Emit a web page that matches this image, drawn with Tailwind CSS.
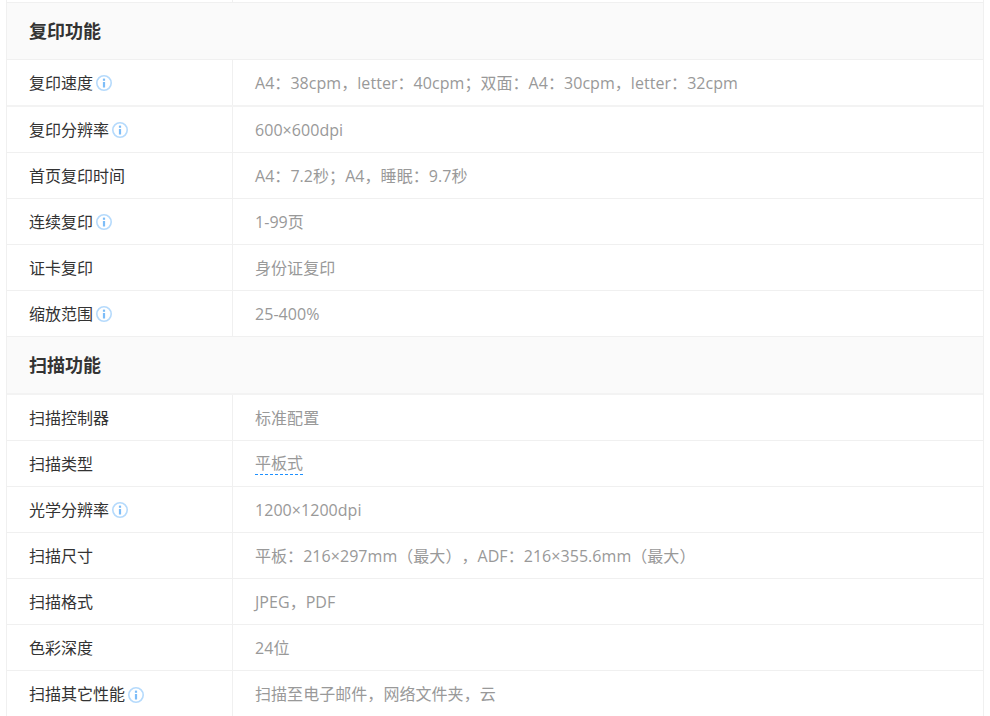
<!DOCTYPE html>
<html lang="zh-CN">

<head>
    <meta charset="UTF-8">
    <meta name="viewport" content="width=device-width, initial-scale=1.0">
    <title>参数</title>
    <script src="https://cdn.jsdelivr.net/npm/@tailwindcss/browser@4"></script>
</head>

<body class="h-[716px] overflow-hidden bg-white font-['Open_Sans','Noto_Sans_CJK_SC',sans-serif] text-[16px] text-[#333] [text-spacing-trim:space-all]">
    <div class="ml-[6px] w-[978px] border-x border-[#f0f0f0]">

        <!-- top sliver of previous row -->
        <div class="flex h-[3px] border-b border-[#f0f0f0]">
            <div class="w-[226px] border-r border-[#f0f0f0]"></div>
        </div>

        <!-- 复印功能 -->
        <div class="flex h-[57px] items-center border-b border-[#f0f0f0] bg-[#fafafa] pl-[22px] text-[18px] font-bold">复印功能</div>

        <div class="flex h-[47px] border-b-2 border-[#f3f3f3]">
            <div class="flex w-[226px] items-center gap-[3px] border-r border-[#f0f0f0] pl-[22px]">复印速度
                <svg class="mt-[1px] h-4 w-4" viewBox="0 0 16 16"><circle cx="8" cy="8" r="7.2" fill="none" stroke="#b5dafc" stroke-width="1.6"/><rect x="6.9" y="7" width="2.2" height="5.5" fill="#7dbdf8"/><rect x="6.9" y="3.6" width="2.2" height="2.2" fill="#7dbdf8"/></svg>
            </div>
            <div class="flex items-center pl-[22px] tracking-[0.05px] text-[#999]">A4：38cpm，letter：40cpm；双面：A4：30cpm，letter：32cpm</div>
        </div>
        <div class="flex h-[46px] border-b border-[#f0f0f0]">
            <div class="flex w-[226px] items-center gap-[3px] border-r border-[#f0f0f0] pl-[22px]">复印分辨率
                <svg class="mt-[1px] h-4 w-4" viewBox="0 0 16 16"><circle cx="8" cy="8" r="7.2" fill="none" stroke="#b5dafc" stroke-width="1.6"/><rect x="6.9" y="7" width="2.2" height="5.5" fill="#7dbdf8"/><rect x="6.9" y="3.6" width="2.2" height="2.2" fill="#7dbdf8"/></svg>
            </div>
            <div class="flex items-center pl-[22px] tracking-[0.05px] text-[#999]">600×600dpi</div>
        </div>
        <div class="flex h-[46px] border-b border-[#f0f0f0]">
            <div class="flex w-[226px] items-center border-r border-[#f0f0f0] pl-[22px]">首页复印时间</div>
            <div class="flex items-center pl-[22px] tracking-[0.05px] text-[#999]">A4：7.2秒；A4，睡眠：9.7秒</div>
        </div>
        <div class="flex h-[46px] border-b border-[#f0f0f0]">
            <div class="flex w-[226px] items-center gap-[3px] border-r border-[#f0f0f0] pl-[22px]">连续复印
                <svg class="mt-[1px] h-4 w-4" viewBox="0 0 16 16"><circle cx="8" cy="8" r="7.2" fill="none" stroke="#b5dafc" stroke-width="1.6"/><rect x="6.9" y="7" width="2.2" height="5.5" fill="#7dbdf8"/><rect x="6.9" y="3.6" width="2.2" height="2.2" fill="#7dbdf8"/></svg>
            </div>
            <div class="flex items-center pl-[22px] tracking-[0.05px] text-[#999]">1-99页</div>
        </div>
        <div class="flex h-[46px] border-b border-[#f0f0f0]">
            <div class="flex w-[226px] items-center border-r border-[#f0f0f0] pl-[22px]">证卡复印</div>
            <div class="flex items-center pl-[22px] tracking-[0.05px] text-[#999]">身份证复印</div>
        </div>
        <div class="flex h-[46px] border-b border-[#f0f0f0]">
            <div class="flex w-[226px] items-center gap-[3px] border-r border-[#f0f0f0] pl-[22px]">缩放范围
                <svg class="mt-[1px] h-4 w-4" viewBox="0 0 16 16"><circle cx="8" cy="8" r="7.2" fill="none" stroke="#b5dafc" stroke-width="1.6"/><rect x="6.9" y="7" width="2.2" height="5.5" fill="#7dbdf8"/><rect x="6.9" y="3.6" width="2.2" height="2.2" fill="#7dbdf8"/></svg>
            </div>
            <div class="flex items-center pl-[22px] tracking-[0.05px] text-[#999]">25-400%</div>
        </div>

        <!-- 扫描功能 -->
        <div class="flex h-[58px] items-center border-b-2 border-[#f3f3f3] bg-[#fafafa] pl-[22px] text-[18px] font-bold">扫描功能</div>

        <div class="flex h-[46px] border-b border-[#f0f0f0]">
            <div class="flex w-[226px] items-center border-r border-[#f0f0f0] pl-[22px]">扫描控制器</div>
            <div class="flex items-center pl-[22px] tracking-[0.05px] text-[#999]">标准配置</div>
        </div>
        <div class="flex h-[46px] border-b border-[#f0f0f0]">
            <div class="flex w-[226px] items-center border-r border-[#f0f0f0] pl-[22px]">扫描类型</div>
            <div class="flex items-center pl-[22px] tracking-[0.05px] text-[#999]"><span class="border-b border-dashed border-[#1e90ff] leading-[22px]">平板式</span></div>
        </div>
        <div class="flex h-[46px] border-b border-[#f0f0f0]">
            <div class="flex w-[226px] items-center gap-[3px] border-r border-[#f0f0f0] pl-[22px]">光学分辨率
                <svg class="mt-[1px] h-4 w-4" viewBox="0 0 16 16"><circle cx="8" cy="8" r="7.2" fill="none" stroke="#b5dafc" stroke-width="1.6"/><rect x="6.9" y="7" width="2.2" height="5.5" fill="#7dbdf8"/><rect x="6.9" y="3.6" width="2.2" height="2.2" fill="#7dbdf8"/></svg>
            </div>
            <div class="flex items-center pl-[22px] tracking-[0.05px] text-[#999]">1200×1200dpi</div>
        </div>
        <div class="flex h-[46px] border-b border-[#f0f0f0]">
            <div class="flex w-[226px] items-center border-r border-[#f0f0f0] pl-[22px]">扫描尺寸</div>
            <div class="flex items-center pl-[22px] tracking-[0.05px] text-[#999]">平板：216×297mm（最大），ADF：216×355.6mm（最大）</div>
        </div>
        <div class="flex h-[46px] border-b border-[#f0f0f0]">
            <div class="flex w-[226px] items-center border-r border-[#f0f0f0] pl-[22px]">扫描格式</div>
            <div class="flex items-center pl-[22px] tracking-[0.05px] text-[#999]">JPEG，PDF</div>
        </div>
        <div class="flex h-[46px] border-b border-[#f0f0f0]">
            <div class="flex w-[226px] items-center border-r border-[#f0f0f0] pl-[22px]">色彩深度</div>
            <div class="flex items-center pl-[22px] tracking-[0.05px] text-[#999]">24位</div>
        </div>
        <div class="flex h-[46px]">
            <div class="flex w-[226px] items-center gap-[3px] border-r border-[#f0f0f0] pl-[22px]">扫描其它性能
                <svg class="mt-[1px] h-4 w-4" viewBox="0 0 16 16"><circle cx="8" cy="8" r="7.2" fill="none" stroke="#b5dafc" stroke-width="1.6"/><rect x="6.9" y="7" width="2.2" height="5.5" fill="#7dbdf8"/><rect x="6.9" y="3.6" width="2.2" height="2.2" fill="#7dbdf8"/></svg>
            </div>
            <div class="flex items-center pl-[22px] tracking-[0.05px] text-[#999]">扫描至电子邮件，网络文件夹，云</div>
        </div>
    </div>
</body>

</html>
